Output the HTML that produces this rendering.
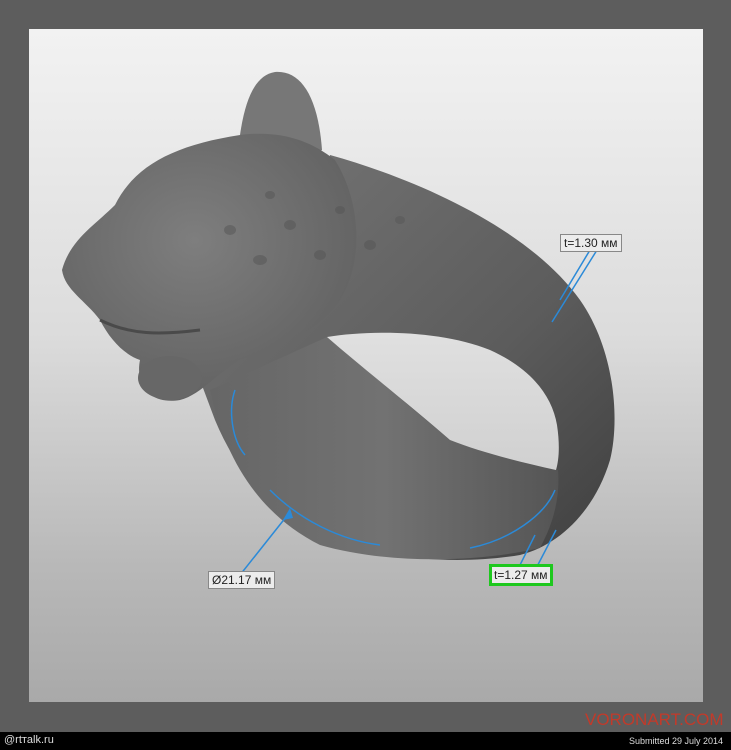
<!DOCTYPE html>
<html><head><meta charset="utf-8"><style>
html,body{margin:0;padding:0;width:731px;height:750px;overflow:hidden;background:#5d5d5d;font-family:"Liberation Sans",sans-serif}
.inner{position:absolute;left:29px;top:29px;width:674px;height:673px;background:linear-gradient(#f2f2f2 0%,#dcdcdc 45%,#b8b8b8 80%,#a9a9a9 100%)}
.bar{position:absolute;left:0;top:732px;width:731px;height:18px;background:#000}
.lbl{position:absolute;font-size:12px;color:#222;background:#ececec;border:1px solid #888;padding:0 3px;line-height:16px;white-space:nowrap}
</style></head><body>
<div class="inner"></div>
<svg style="position:absolute;left:0;top:0" width="731" height="732">
<defs>
<linearGradient id="band" x1="0" y1="0" x2="1" y2="1"><stop offset="0" stop-color="#767676"/><stop offset=".6" stop-color="#5c5c5c"/><stop offset="1" stop-color="#3e3e3e"/></linearGradient>
<linearGradient id="ins" x1="0" y1="0" x2="1" y2="0"><stop offset="0" stop-color="#666"/><stop offset=".5" stop-color="#727272"/><stop offset="1" stop-color="#555"/></linearGradient>
<radialGradient id="head" cx=".45" cy=".4" r=".7"><stop offset="0" stop-color="#7e7e7e"/><stop offset="1" stop-color="#5e5e5e"/></radialGradient>
<linearGradient id="hole" x1="0" y1="0" x2="0" y2="1"><stop offset="0" stop-color="#e0e0e0"/><stop offset="1" stop-color="#d0d0d0"/></linearGradient>
</defs>
<path d="M330,155 C420,180 530,230 580,300 C615,350 620,420 610,460 C595,510 560,545 520,555 C460,565 390,560 330,540 C280,520 240,480 215,420 L200,380 L300,300 Z" fill="url(#band)"/>
<path d="M210,390 C225,460 260,515 320,545 C390,565 480,562 540,548 C555,520 560,495 558,470 L450,440 L327,337 Z" fill="url(#ins)"/>
<path d="M327,337 C370,330 440,330 490,350 C530,368 552,395 557,425 C560,445 559,460 556,470 C520,462 480,452 450,440 C410,405 365,370 327,337 Z" fill="url(#hole)"/>
<path d="M240,135 C245,100 255,75 275,72 C300,70 318,95 322,150 L300,160 Z" fill="#777"/>
<path d="M62,270 C70,240 95,225 115,205 C135,165 175,145 240,135 C280,130 310,140 335,160 C360,200 365,260 340,300 C320,330 280,350 240,360 C215,375 200,395 180,400 C150,405 135,385 140,360 C125,355 110,340 100,320 C85,300 65,290 62,270 Z" fill="url(#head)"/>
<ellipse cx="170" cy="378" rx="32" ry="22" fill="#676767"/>
<g fill="#555" opacity=".5">
<ellipse cx="230" cy="230" rx="6" ry="5"/><ellipse cx="260" cy="260" rx="7" ry="5"/><ellipse cx="290" cy="225" rx="6" ry="5"/><ellipse cx="320" cy="255" rx="6" ry="5"/><ellipse cx="270" cy="195" rx="5" ry="4"/><ellipse cx="340" cy="210" rx="5" ry="4"/><ellipse cx="370" cy="245" rx="6" ry="5"/><ellipse cx="400" cy="220" rx="5" ry="4"/>
</g>
<path d="M100,320 C130,335 160,335 200,330" stroke="#4a4a4a" stroke-width="3" fill="none"/>
<g stroke="#2b8ad8" stroke-width="1.5" fill="none">
<path d="M235,390 C228,410 232,440 245,455"/>
<path d="M270,490 C300,520 340,540 380,545"/>
<path d="M470,548 C510,540 545,515 555,490"/>
<line x1="552" y1="322" x2="597" y2="250"/><line x1="560" y1="300" x2="590" y2="250"/>
<line x1="520" y1="565" x2="535" y2="535"/><line x1="530" y1="580" x2="556" y2="530"/>
<line x1="240" y1="575" x2="290" y2="512"/>
</g>
<polygon points="290,508 283,520 293,518" fill="#2b8ad8"/>
<text x="585" y="725" font-size="17" fill="#c23a2a" font-family="Liberation Sans">VORONART.COM</text>
</svg>
<div class="lbl" style="left:560px;top:234px">t=1.30 мм</div>
<div class="lbl" style="left:489px;top:564px;border:3px solid #1ec81e;padding:0 2px">t=1.27 мм</div>
<div class="lbl" style="left:208px;top:571px">Ø21.17 мм</div>
<div class="bar">
<span style="position:absolute;left:4px;top:2px;color:#ddd;font-size:11px">@rtтalk.ru</span>
<span style="position:absolute;right:8px;top:4px;color:#ddd;font-size:9px">Submitted 29 July 2014</span>
</div>
</body></html>
